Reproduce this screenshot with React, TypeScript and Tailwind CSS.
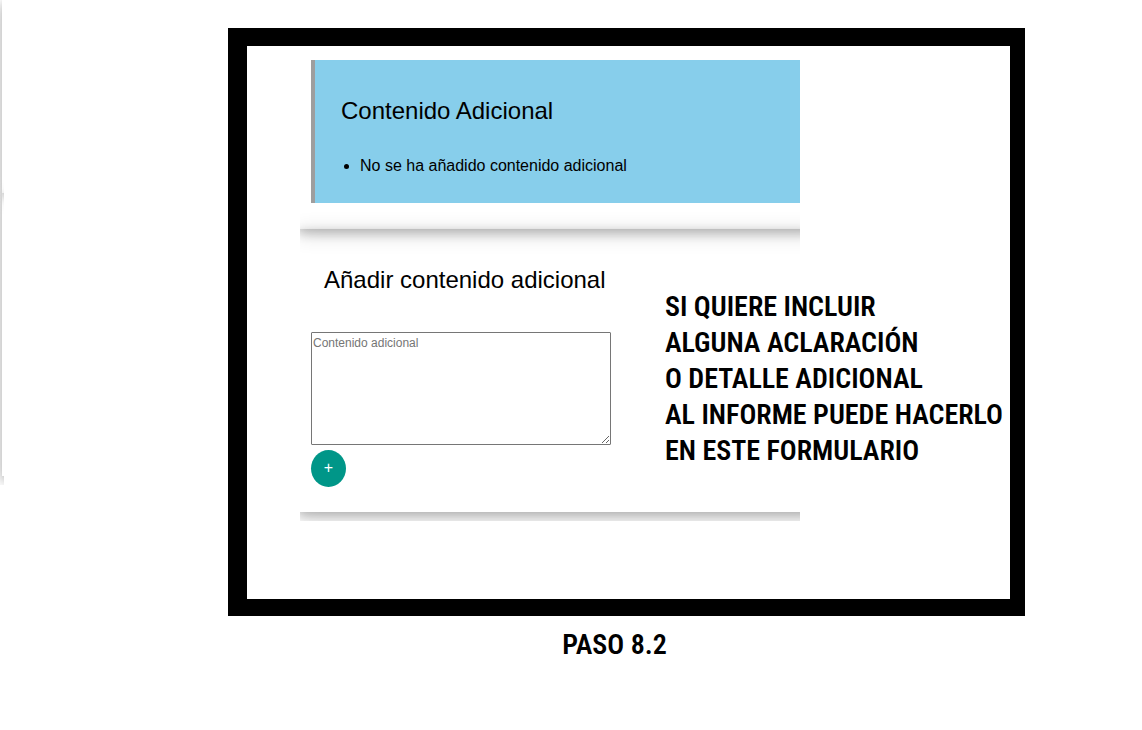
import React from "react";

const card =
  "shadow-[0_4px_10px_0_rgba(0,0,0,0.2),0_4px_20px_0_rgba(0,0,0,0.19)]";

const note =
  "font-['Roboto_Condensed','Liberation_Sans_Narrow',sans-serif] text-[28px] leading-9 font-semibold whitespace-nowrap";

function PreviousPanelEdge() {
  return (
    <aside className="h-[485px] w-1 shrink-0 overflow-hidden">
      <div className={`ml-0.5 -mr-5 h-[193px] ${card}`} />
      <div className={`ml-0.5 -mr-5 h-[283px] ${card}`} />
    </aside>
  );
}

function ContentSummary() {
  return (
    <section className={`-mt-5 -mr-5 -ml-0.5 pt-[34px] pr-5 pb-[26px] pl-[13px] ${card}`}>
      <div className="border-l-4 border-[#9e9e9e] bg-[#87ceeb] pt-[33px] pb-[25px] pl-[26px]">
        <h3 className="text-2xl leading-9">Contenido Adicional</h3>
        <ul className="mt-[25px] list-disc pl-[19px]">
          <li>No se ha añadido contenido adicional</li>
        </ul>
      </div>
    </section>
  );
}

function AddContentForm() {
  return (
    <section className={`-mr-5 -ml-0.5 pt-[33px] pb-[25px] pl-[13px] ${card}`}>
      <form onSubmit={(e) => e.preventDefault()}>
        <h3 className="pl-[13px] text-2xl leading-9">
          <label htmlFor="contenido">Añadir contenido adicional</label>
        </h3>
        <textarea
          id="contenido"
          placeholder="Contenido adicional"
          className="mt-[34px] block h-[113px] w-[300px] resize rounded-[1px] border border-[#767676] bg-white px-px py-0.5 text-xs placeholder:text-[#757575]"
        />
        <button
          type="submit"
          className="mt-[5px] block h-[37px] w-[35px] rounded-[50%] bg-[#009688] pb-0.5 text-center text-base text-white"
        >
          +
        </button>
      </form>
    </section>
  );
}

export default function App() {
  return (
    <div className="flex min-h-screen items-start bg-white font-['Liberation_Sans',Arial,sans-serif] text-base text-black">
      <PreviousPanelEdge />
      <main className="min-w-0 flex-1 pt-7 pr-[117px] pl-56">
        <div className="flex items-start border-t-[18px] border-r-[15px] border-b-[17px] border-l-[19px] border-black pb-[78px] pl-[53px]">
          <div className="w-[500px] shrink-0 overflow-hidden pb-[9px]">
            <ContentSummary />
            <AddContentForm />
          </div>
          <p className={`relative mt-[243px] -ml-[135px] ${note}`}>
            SI QUIERE INCLUIR
            <br />
            ALGUNA ACLARACIÓN
            <br />
            O DETALLE ADICIONAL
            <br />
            AL INFORME PUEDE HACERLO
            <br />
            EN ESTE FORMULARIO
          </p>
        </div>
        <p className={`mt-[11px] pr-6 text-center ${note}`}>PASO 8.2</p>
      </main>
    </div>
  );
}
